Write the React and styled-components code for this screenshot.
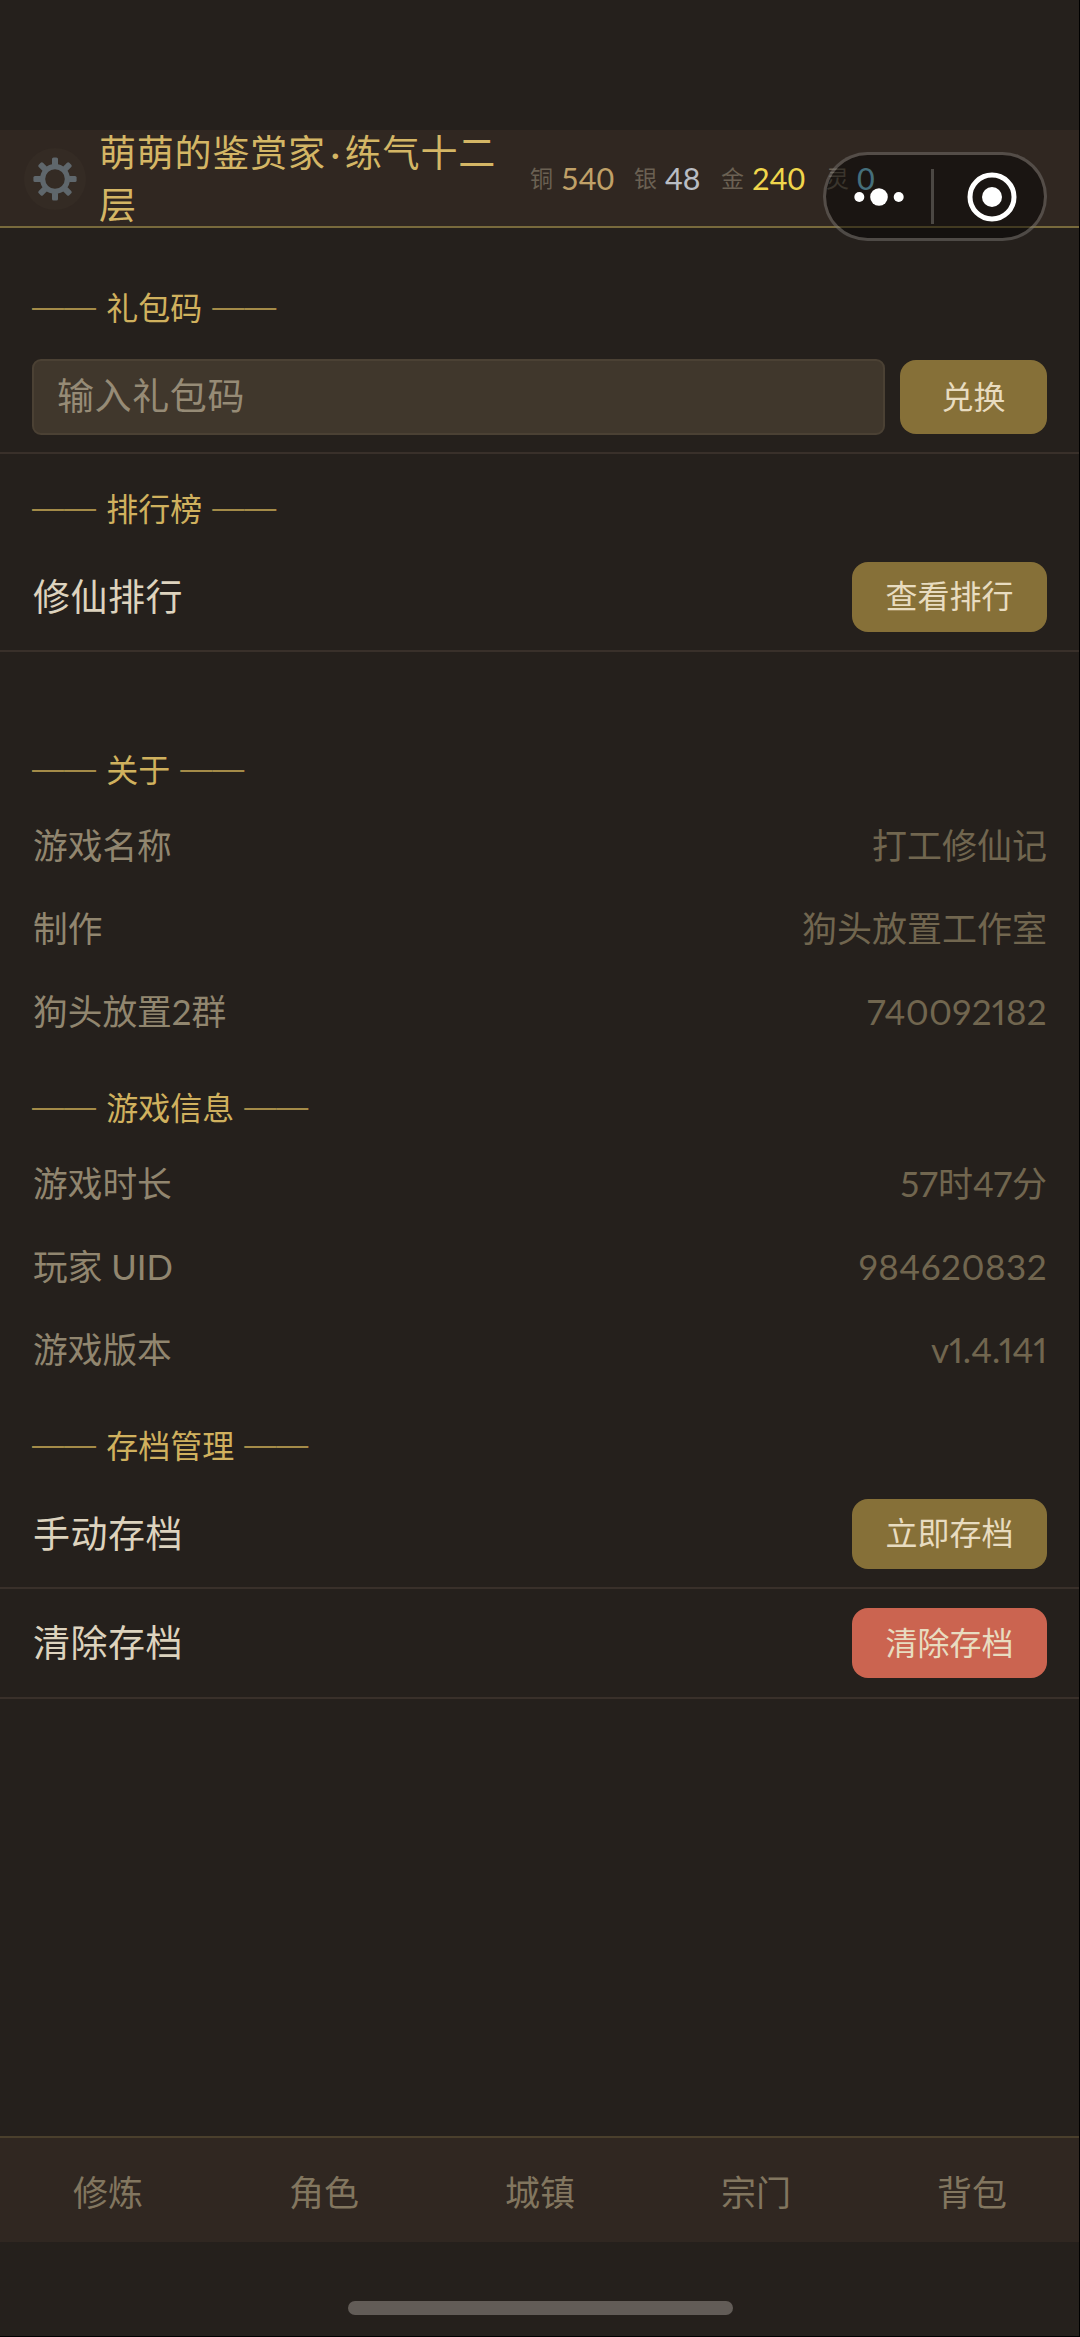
import React from "react";
import styled, { createGlobalStyle } from "styled-components";

const GlobalStyle = createGlobalStyle`
  * { box-sizing: border-box; }
  body {
    margin: 0;
    background: #25201c;
    font-family: Lato, "Noto Sans CJK SC", sans-serif;
    -webkit-font-smoothing: antialiased;
  }
`;

const Screen = styled.div`
  position: relative;
  display: flex;
  flex-direction: column;
  width: 1080px;
  height: 2337px;
  padding-top: 130px;
  overflow: hidden;
  background: #25201c;
  &::after {
    content: "";
    position: absolute;
    inset: 0;
    border-right: 1px solid #000;
    border-bottom: 1px solid #000;
    pointer-events: none;
  }
`;

const Header = styled.header`
  display: flex;
  align-items: center;
  height: 98px;
  flex: none;
  padding-left: 24px;
  background: #302721;
  border-bottom: 2px solid #786a3c;
`;

const GearButton = styled.button`
  display: flex;
  align-items: center;
  justify-content: center;
  width: 62px;
  height: 62px;
  flex: none;
  padding: 0;
  border: 0;
  border-radius: 50%;
  background: #342b24;
  margin-top: 2px;
`;

const PlayerName = styled.h1`
  width: 412px;
  flex: none;
  margin: 0 0 0 13px;
  padding-bottom: 1px;
  font: 400 37px/51px "Noto Sans CJK SC", sans-serif;
  letter-spacing: 0.8px;
  color: #d4b665;
`;

const MidDot = styled.span`
  display: inline-block;
  width: 19px;
  font-family: Lato, sans-serif;
  letter-spacing: 0;
  text-align: center;
`;

const Wallet = styled.div`
  display: flex;
  align-items: center;
  margin-left: 19px;
`;

const Coin = styled.div`
  display: flex;
  align-items: center;
  width: ${(p) => p.$width}px;
  flex: none;
`;

const CoinName = styled.span`
  width: 31px;
  font-size: 23px;
  line-height: 34px;
  color: #6b6153;
`;

const CoinValue = styled.span`
  font-size: 30.5px;
  line-height: 34px;
  color: ${(p) => p.$color};
`;

const Capsule = styled.div`
  position: absolute;
  top: 152px;
  left: 823px;
  display: flex;
  align-items: center;
  width: 224px;
  height: 89px;
  border: 3px solid rgba(120, 116, 112, 0.5);
  border-radius: 45px;
  background: rgba(0, 0, 0, 0.45);
  background-clip: padding-box;
`;

const CapsuleHalf = styled.div`
  display: flex;
  flex: 1;
  align-items: center;
  justify-content: center;
  padding-left: ${(p) => p.$inset || 0}px;
`;

const CapsuleDivider = styled.div`
  width: 3px;
  height: 55px;
  background: #4b4743;
`;

const Content = styled.main`
  display: flex;
  flex: 1;
  flex-direction: column;
  padding-top: 25px;
`;

const Group = styled.section`
  padding-top: ${(p) => (p.$spaced ? 96 : 33)}px;
`;

const GroupTitle = styled.h2`
  height: 45px;
  margin: 0 0 11px 32px;
  font: 400 32px/41px "Noto Sans CJK SC", sans-serif;
  word-spacing: 3px;
  color: #d0b15e;
`;

const Dash = styled.span`
  font-family: "Liberation Sans", sans-serif;
  line-height: 0;
  vertical-align: 3px;
  color: #a48b48;
`;

const ActionRow = styled.div`
  display: flex;
  align-items: center;
  justify-content: space-between;
  gap: 15px;
  height: ${(p) => p.$height || 109}px;
  padding: 0 33px 0 32px;
  border-bottom: 2px solid #39302a;
`;

const ActionLabel = styled.span`
  padding: 0 0 1px 1px;
  font-size: 37px;
  letter-spacing: 0.5px;
  line-height: 53px;
  color: #ddd3be;
`;

const CodeInput = styled.input`
  flex: 1;
  min-width: 0;
  height: 76px;
  padding: 0 24px 6px 23px;
  border: 2px solid #4b4134;
  border-radius: 9px;
  background: #40372c;
  font: 400 37px/53px "Noto Sans CJK SC", sans-serif;
  letter-spacing: 0.6px;
  &::placeholder { color: #968b76; opacity: 1; }
`;

const Button = styled.button`
  flex: none;
  height: ${(p) => (p.$tall ? 74 : 70)}px;
  padding: 0 0 4px;
  width: ${(p) => (p.$tall ? 147 : 195)}px;
  border: 0;
  border-radius: 16px;
  background: ${(p) => (p.$danger ? "#cb6450" : "#867038")};
  font: 400 32px/45px "Noto Sans CJK SC", sans-serif;
  color: #e8dcc0;
`;

const InfoRow = styled.div`
  display: flex;
  align-items: center;
  justify-content: space-between;
  height: 83px;
  padding: 0 33px 1px 33px;
  font-size: 35px;
  line-height: 49px;
  font-variant-numeric: proportional-nums;
`;

const InfoLabel = styled.span`
  font-size: 34.7px;
  color: #91866f;
`;

const InfoValue = styled.span`
  color: #71664f;
  letter-spacing: ${(p) => p.$tracking || 0}px;
`;

const TabBar = styled.nav`
  display: grid;
  grid-template-columns: repeat(5, 1fr);
  height: 106px;
  flex: none;
  border-top: 2px solid #4a3f2c;
  background: #302721;
`;

const Tab = styled.a`
  display: flex;
  align-items: center;
  justify-content: center;
  padding-top: 5px;
  font-size: 35px;
  line-height: 49px;
  color: #82765f;
`;

const HomeArea = styled.footer`
  display: flex;
  justify-content: center;
  height: 95px;
  flex: none;
  padding-top: 59px;
`;

const HomeBar = styled.div`
  width: 385px;
  height: 14px;
  border-radius: 7px;
  background: #625c57;
`;

const GearIcon = () => (
  <svg width="44" height="44" viewBox="-22 -22 44 44">
    <circle r="12.4" fill="none" stroke="#5f676c" strokeWidth="5.2" />
    {[0, 45, 90, 135, 180, 225, 270, 315].map((a) => (
      <rect key={a} x="-3" y="-21.6" width="6" height="8.5" rx="1.6" fill="#5f676c" transform={`rotate(${a})`} />
    ))}
  </svg>
);

const coins = [
  { name: "铜", value: "540", color: "#c0a168", width: 104 },
  { name: "银", value: "48", color: "#b9bdc4", width: 87 },
  { name: "金", value: "240", color: "#f0d64c", width: 105 },
  { name: "灵", value: "0", color: "#7fcbe0", width: 50 },
];

const about = [
  { label: "游戏名称", value: "打工修仙记" },
  { label: "制作", value: "狗头放置工作室" },
  { label: "狗头放置2群", value: "740092182", tracking: 0.3 },
];

const info = [
  { label: "游戏时长", value: "57时47分" },
  { label: "玩家 UID", value: "984620832", tracking: 0.5 },
  { label: "游戏版本", value: "v1.4.141" },
];

const tabs = ["修炼", "角色", "城镇", "宗门", "背包"];

const Title = ({ children }) => (
  <GroupTitle>
    <Dash>——</Dash> {children} <Dash>——</Dash>
  </GroupTitle>
);

const InfoList = ({ items }) =>
  items.map((item) => (
    <InfoRow key={item.label}>
      <InfoLabel>{item.label}</InfoLabel>
      <InfoValue $tracking={item.tracking}>{item.value}</InfoValue>
    </InfoRow>
  ));

export default function App() {
  return (
    <Screen>
      <GlobalStyle />
      <Header>
        <GearButton aria-label="设置">
          <GearIcon />
        </GearButton>
        <PlayerName>
          <span>萌萌的鉴赏家</span>
          <MidDot>·</MidDot>
          <span>练气十二</span>
          <span>层</span>
        </PlayerName>
        <Wallet>
          {coins.map((c) => (
            <Coin key={c.name} $width={c.width}>
              <CoinName>{c.name}</CoinName>
              <CoinValue $color={c.color}>{c.value}</CoinValue>
            </Coin>
          ))}
        </Wallet>
      </Header>
      <Capsule>
        <CapsuleHalf>
          <svg width="52" height="20" viewBox="-26 -10 52 20" fill="#fff">
            <circle cx="-19.7" r="5" />
            <circle r="8.8" />
            <circle cx="19.7" r="5" />
          </svg>
        </CapsuleHalf>
        <CapsuleDivider />
        <CapsuleHalf $inset={5}>
          <svg width="50" height="50" viewBox="-25 -25 50 50">
            <circle r="22" fill="none" stroke="#fff" strokeWidth="5" />
            <circle r="10" fill="#fff" />
          </svg>
        </CapsuleHalf>
      </Capsule>
      <Content>
        <Group>
          <Title>礼包码</Title>
          <ActionRow $height={112}>
            <CodeInput placeholder="输入礼包码" />
            <Button $tall>兑换</Button>
          </ActionRow>
        </Group>
        <Group>
          <Title>排行榜</Title>
          <ActionRow>
            <ActionLabel>修仙排行</ActionLabel>
            <Button>查看排行</Button>
          </ActionRow>
        </Group>
        <Group $spaced>
          <Title>关于</Title>
          <InfoList items={about} />
        </Group>
        <Group>
          <Title>游戏信息</Title>
          <InfoList items={info} />
        </Group>
        <Group>
          <Title>存档管理</Title>
          <ActionRow>
            <ActionLabel>手动存档</ActionLabel>
            <Button>立即存档</Button>
          </ActionRow>
          <ActionRow $height={110}>
            <ActionLabel>清除存档</ActionLabel>
            <Button $danger>清除存档</Button>
          </ActionRow>
        </Group>
      </Content>
      <TabBar>
        {tabs.map((t) => (
          <Tab key={t}>{t}</Tab>
        ))}
      </TabBar>
      <HomeArea>
        <HomeBar />
      </HomeArea>
    </Screen>
  );
}
